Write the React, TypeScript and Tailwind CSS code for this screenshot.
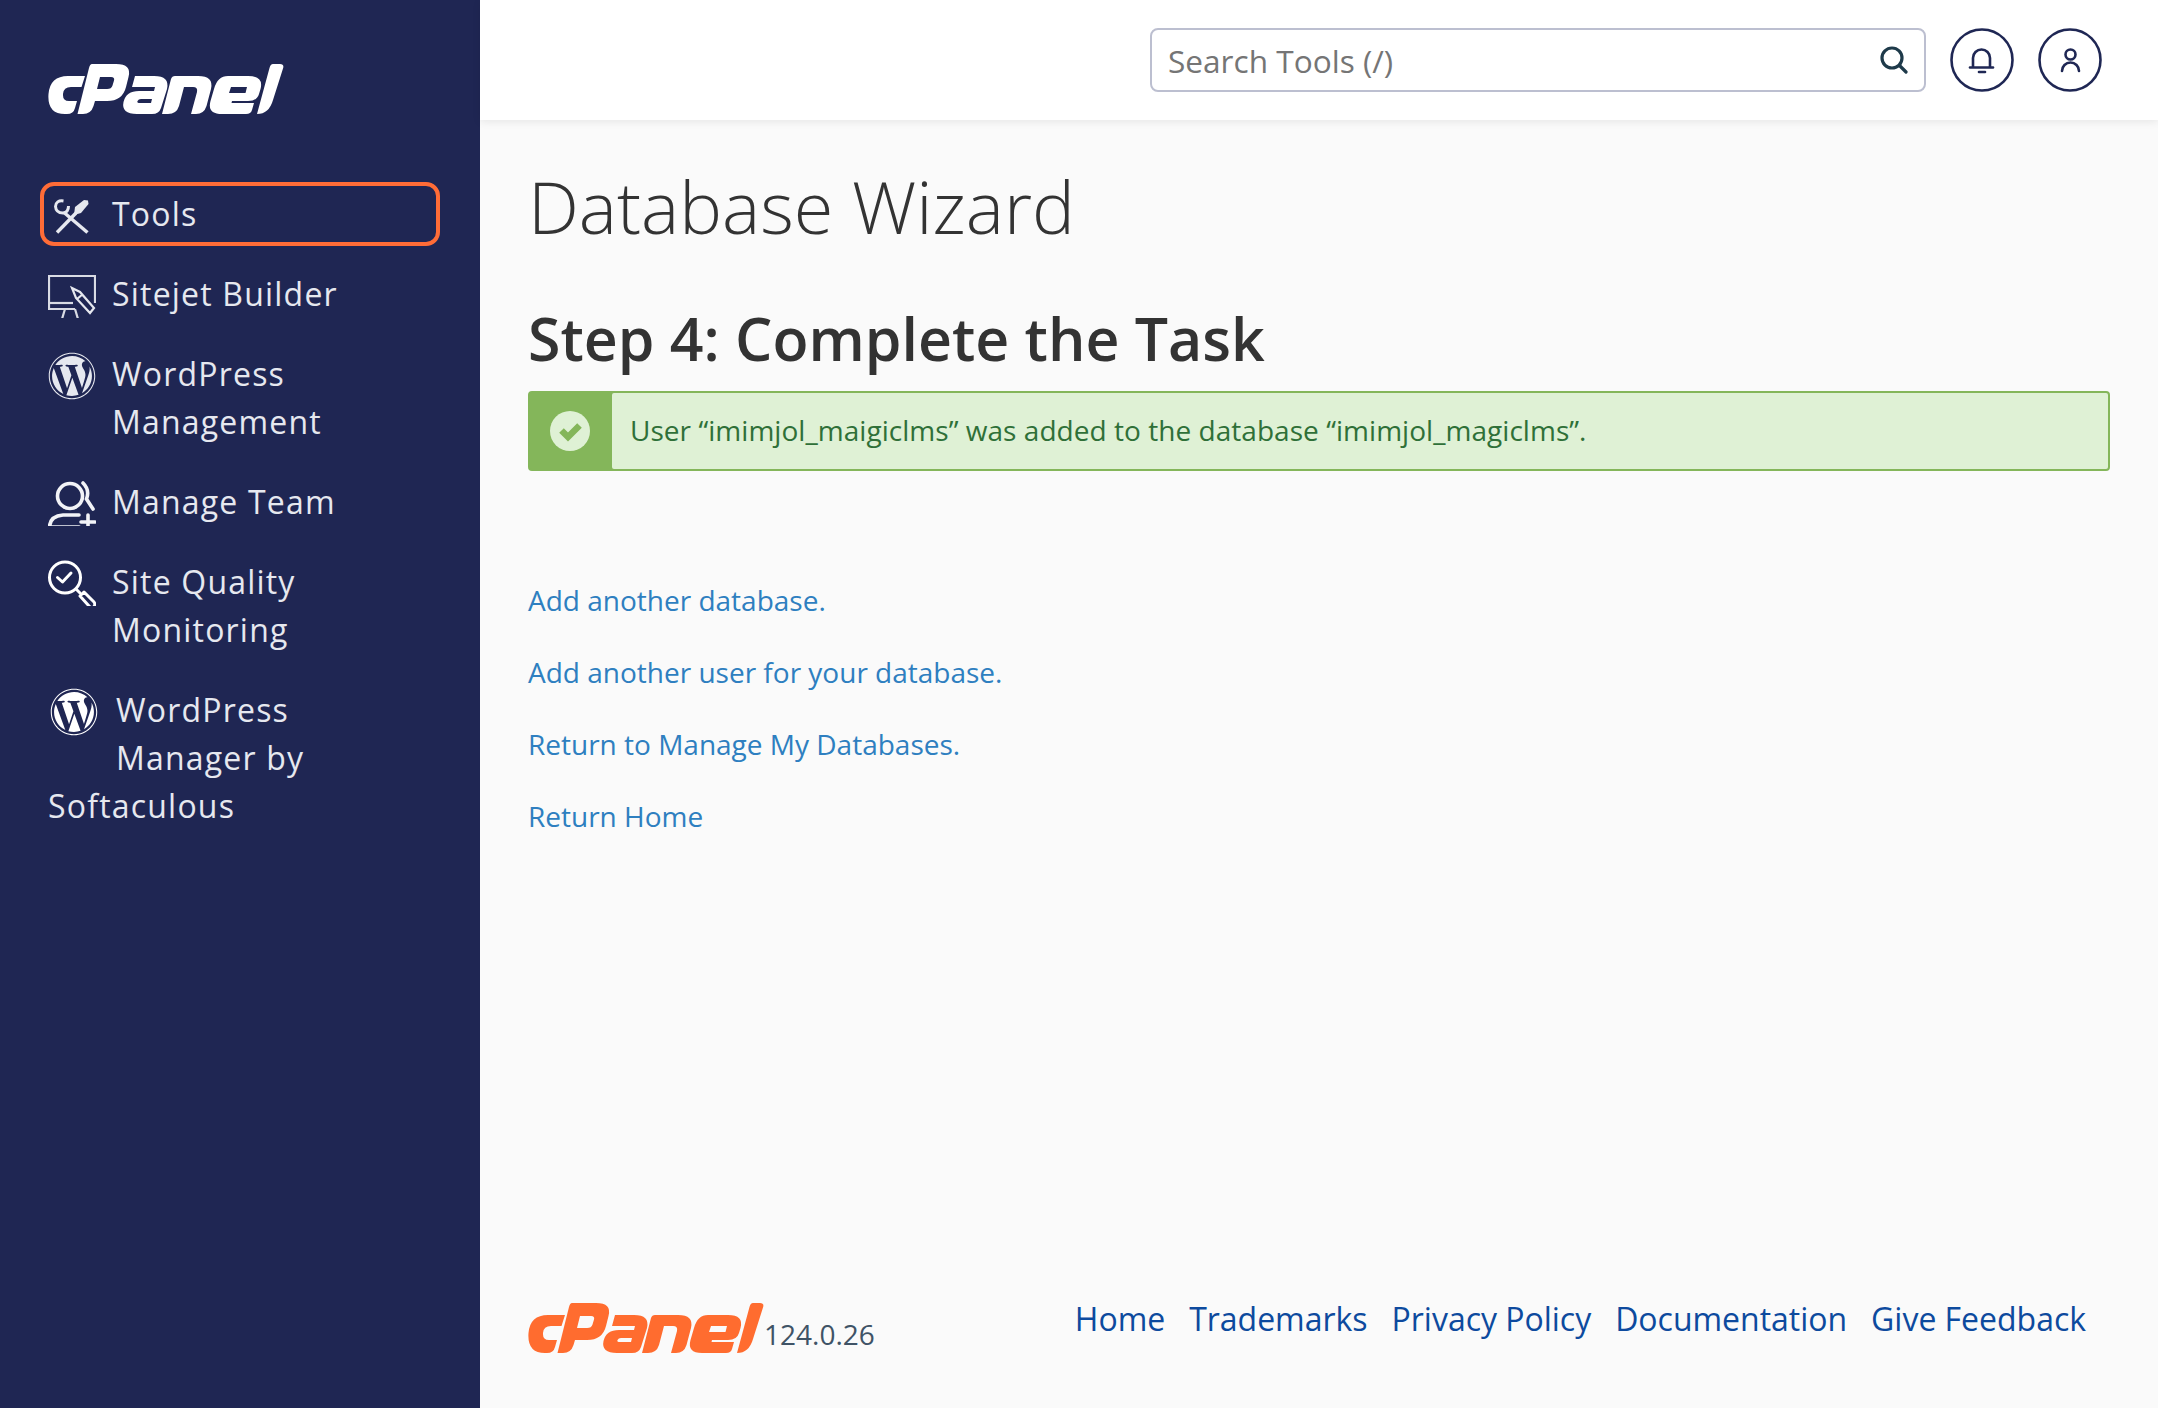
import React from 'react';
import { FaWordpress } from 'react-icons/fa';

const CpanelLogo = ({ className }: { className: string }) => (
  <svg viewBox="0 0 236 50" className={className} fill="currentColor" fillRule="evenodd">
    <path d="M37 12 L33.5 23 L23 23 Q15.5 23 15 30 Q14.5 37 21 37 L29 37 L27 44 Q25.5 50 19 50 L17 50 Q-1 50 0.5 30 Q2 12 20 12 Z" />
    <path d="M44 0 L68 0 Q84 0 80.5 13 L78 23 Q74.5 37 59 37 L47 37 L45.5 42 Q43 50 35 50 L29.5 50 L41 4 Q42 0 44 0 Z M52 13 L63 13 Q67 13 66 16.5 L64.5 21.5 Q63.5 25 59 25 L49 25 Z" />
    <path d="M87 12 L106 12 Q122 12 119 25 L113 44 Q111 50 104 50 L89 50 Q73 50 75.5 38 Q78 27 91 27 L106 27 L107 23 L84 23 Z M93 35 L104 35 L103 39 L92 39 Q88.5 39 89.5 37 Q90.5 35 93 35 Z" />
    <path d="M127 12 L150 12 Q166 12 163 25 L158.5 42 Q156 50 148 50 L143 50 L149 28 Q150 23 145 23 L136 23 L131 42 Q128.5 50 120 50 L114 50 L123 15 Q124 12 127 12 Z" />
    <path d="M180 12 L200 12 Q216 12 212.5 25 L211 30 Q209 37 200 37 L184 37 L183.5 39 L206 39 L204 46 Q203 50 198 50 L174 50 Q159 50 162.5 37 L166 25 Q169.5 12 180 12 Z M183 23 L199 23 L197.5 29 L181 29 Z" />
    <path d="M225 0 L232 0 Q236.5 0 235 4.5 L225 36 Q221 50 209 50 L221.5 4 Q222.5 0 225 0 Z" />
  </svg>
);

const ToolsIcon = () => (
  <svg viewBox="0 0 48 48" className="w-12 h-12 shrink-0" fill="none" stroke="#e6e8ef" strokeWidth="3.4">
    <path d="M15.5 11 Q8 10 7.5 16.5 Q8 23 15 23 Q20.5 22.5 20.5 16" strokeWidth="3" />
    <path d="M16 22.5 L39.5 42.5" />
    <path d="M9 42.5 L28 23" />
    <path d="M26 25 L27 17 L36 10 L40 10.5 L40.5 14 L33 23 Z" fill="#e6e8ef" stroke="none" />
  </svg>
);

const SitejetIcon = () => (
  <svg viewBox="0 0 48 48" className="w-12 h-12 shrink-0" fill="none" stroke="#d9dbe4" strokeWidth="2.2">
    <path d="M47 33 V6 H1 V39 H27" />
    <path d="M1 33 H25" />
    <path d="M17 39 L14 49 M27 39 L30 49 M10 49.5 H36" />
    <path d="M24 18 L32 22 L46 38 L42 43 L28 28 Z M29 29 L35 24" stroke="#e6e8ef" fill="#1f2653" />
  </svg>
);

const ManageTeamIcon = () => (
  <svg viewBox="0 0 48 48" className="w-12 h-12 shrink-0" fill="none" stroke="#f2f3f7" strokeWidth="3.6" strokeLinecap="round">
    <circle cx="22" cy="18" r="12.5" />
    <path d="M35 5 Q42 12 38.5 21 L45 31" />
    <path d="M31 37 H15 Q2 38 1.5 49 H31" />
    <path d="M40 37 V51 M33 44 H47" />
  </svg>
);

const QualityIcon = () => (
  <svg viewBox="0 0 48 48" className="w-12 h-12 shrink-0" fill="none" stroke="#ffffff" strokeWidth="3" strokeLinecap="round" strokeLinejoin="round">
    <circle cx="17" cy="19.5" r="15.5" />
    <path d="M9.5 19.5 L14.5 24 L23 15" />
    <path d="M28 31 L32 35" />
    <path d="M32 38 L36 34 L46 44 Q48 47 45.5 49 Q43 50.5 41 48 Z" />
  </svg>
);

const navItemClass = 'flex items-start gap-4 text-[#e6e8ef] tracking-[1.2px]';

const App = () => {
  return (
    <div className="flex h-[1408px] w-full overflow-hidden font-['Open_Sans',sans-serif]">
      <aside className="w-[480px] shrink-0 bg-[#1f2653] pl-12 pr-12">
        <CpanelLogo className="mt-16 w-[236px] h-[50px] text-white" />
        <nav className="mt-[76px] flex flex-col gap-8 text-[32px] leading-[48px]">
          <a className={`${navItemClass} rounded-[6px] outline-4 outline-offset-4 outline-[#ff6c37]`}>
            <ToolsIcon />
            <span>Tools</span>
          </a>
          <a className={navItemClass}>
            <SitejetIcon />
            <span>Sitejet Builder</span>
          </a>
          <a className={navItemClass}>
            <FaWordpress className="w-12 h-12 shrink-0 mt-0.5 text-[#e6e8ef]" />
            <span>
              WordPress
              <br />
              Management
            </span>
          </a>
          <a className={navItemClass}>
            <ManageTeamIcon />
            <span>Manage Team</span>
          </a>
          <a className={navItemClass}>
            <QualityIcon />
            <span>
              Site Quality
              <br />
              Monitoring
            </span>
          </a>
          <a className="block text-[#e6e8ef] tracking-[1.2px]">
            <FaWordpress className="inline-block w-12 h-12 ml-0.5 mr-[18px] translate-y-0.5 align-top text-white" />
            WordPress
            <br />
            <span className="ml-[68px]">Manager by</span>
            <br />
            Softaculous
          </a>
        </nav>
      </aside>

      <main className="flex flex-1 min-w-0 flex-col bg-[#fafafa]">
        <header className="flex h-[120px] shrink-0 items-center justify-end gap-6 bg-white pr-14 shadow-[0_2px_8px_rgba(0,0,0,0.08)]">
          <div className="flex h-16 w-[776px] items-center rounded-lg border-2 border-[#bcbfd0] bg-white pl-4 pr-4">
            <input
              placeholder="Search Tools (/)"
              className="min-w-0 flex-1 bg-transparent pt-0.5 text-[31.6px] outline-none placeholder:text-[#757575]"
            />
            <svg viewBox="0 0 28 28" className="w-7 h-7 shrink-0" fill="none" stroke="#1e3a4a" strokeWidth="3.2" strokeLinecap="round">
              <circle cx="12" cy="12" r="10" />
              <path d="M20 20 L26 26" />
            </svg>
          </div>
          <button className="h-16 w-16 shrink-0">
            <svg viewBox="0 0 64 64" className="w-16 h-16" fill="none" stroke="#1f2754" strokeWidth="2.6">
              <circle cx="32" cy="32" r="30.5" />
              <path d="M23 39 V30 A8.5 8.5 0 0 1 40 30 V39" />
              <path d="M20 39.5 H43" strokeLinecap="round" />
              <path d="M29 44 H35" strokeLinecap="round" />
            </svg>
          </button>
          <button className="h-16 w-16 shrink-0">
            <svg viewBox="0 0 64 64" className="w-16 h-16" fill="none" stroke="#1f2754" strokeWidth="2.6">
              <circle cx="32" cy="32" r="30.5" />
              <circle cx="32.5" cy="26.5" r="5" />
              <path d="M24 43 A8.5 8.5 0 0 1 41 43" strokeLinecap="round" />
            </svg>
          </button>
        </header>

        <div className="flex flex-1 flex-col pl-12 pr-12">
          <h1 className="mt-9 text-[72px] leading-[100px] font-light text-[#333333]">Database Wizard</h1>
          <h2 className="mt-[45px] text-[59px] leading-[74px] font-semibold text-[#333333]">Step 4: Complete the Task</h2>

          <div className="mt-4 flex h-20 items-stretch rounded border-2 border-[#84b65a] bg-[#84b65a]">
            <div className="flex w-[82px] shrink-0 items-center justify-center pr-0.5">
              <svg viewBox="0 0 40 40" className="w-10 h-10">
                <circle cx="20" cy="20" r="20" fill="#dff1d5" />
                <path d="M11.5 19.5 L18 26 L29.5 14.5" fill="none" stroke="#84b65a" strokeWidth="6.5" />
              </svg>
            </div>
            <div className="flex flex-1 items-center rounded-[2px] bg-[#dff1d5] pb-0.5 pl-[18px] text-[28px] tracking-[0.04px] text-[#2f7038]">
              User “imimjol_maigiclms” was added to the database “imimjol_magiclms”.
            </div>
          </div>

          <div className="mt-[105px] flex flex-col gap-6 text-[28px] leading-[48px] text-[#2e7fc0]">
            <a>Add another database.</a>
            <a>Add another user for your database.</a>
            <a>Return to Manage My Databases.</a>
            <a>Return Home</a>
          </div>

          <footer className="mt-auto flex items-start justify-between pb-[55px] pr-6">
            <div className="flex items-end">
              <CpanelLogo className="w-[236px] h-[50px] text-[#ff6c2f]" />
              <span className="text-[28px] leading-[38px] -mt-px text-[#3f5366]">124.0.26</span>
            </div>
            <div className="flex gap-6 text-[32px] leading-[48px] -mt-2 text-[#0d4a9e] tracking-[-0.02px]">
              <a>Home</a>
              <a>Trademarks</a>
              <a>Privacy Policy</a>
              <a>Documentation</a>
              <a>Give Feedback</a>
            </div>
          </footer>
        </div>
      </main>
    </div>
  );
};

export default App;
